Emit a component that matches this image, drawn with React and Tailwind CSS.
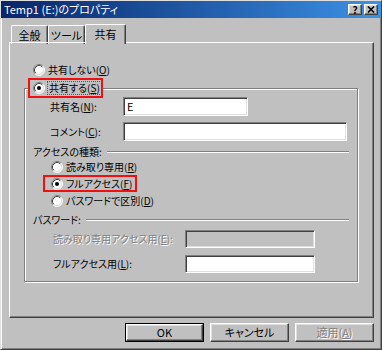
import React from 'react';

// Win2000 style "共有" property sheet

const sunken =
  'border border-t-[#808080] border-l-[#808080] border-r-white border-b-white shadow-[inset_1px_1px_0_#404040,inset_-1px_-1px_0_#dfdfdf]';
const raised =
  'border border-t-white border-l-white border-r-[#404040] border-b-[#404040] shadow-[inset_-1px_-1px_0_#808080,inset_1px_1px_0_#dfdfdf]';
const disabledText = 'text-[#808080] [text-shadow:1px_1px_0_#fff]';

const Radio = ({ checked }) => (
  <svg width="12" height="12" viewBox="0 0 12 12" className="shrink-0">
    <circle cx="6" cy="6" r="5" fill="#fff" />
    <path d="M2.11 9.89 A5.5 5.5 0 0 1 9.89 2.11" fill="none" stroke="#808080" />
    <path d="M9.89 2.11 A5.5 5.5 0 0 1 2.11 9.89" fill="none" stroke="#fff" />
    <path d="M2.82 9.18 A4.5 4.5 0 0 1 9.18 2.82" fill="none" stroke="#404040" />
    <path d="M9.18 2.82 A4.5 4.5 0 0 1 2.82 9.18" fill="none" stroke="#dfdfdf" />
    {checked && <circle cx="6" cy="6" r="2" fill="#000" />}
  </svg>
);

const Key = ({ k }) => (
  <>
    (<span className="underline underline-offset-1">{k}</span>)
  </>
);

const Header = ({ children, className = '' }) => (
  <div className={`flex items-center h-[12px] pl-[8px] pr-[8px] ${className}`}>
    <span className="whitespace-nowrap">{children}</span>
    <div className="ml-[5px] flex-1 h-[2px] border-t border-t-[#808080] border-b border-b-white" />
  </div>
);

const Tab = ({ label, active, width }) =>
  active ? (
    <div
      className={`relative z-10 h-[20px] ${width} bg-[#c0c0c0] rounded-t-[2px] border-t border-l border-t-white border-l-white border-r border-r-[#404040] shadow-[inset_-1px_0_0_#808080] flex justify-center pt-[4px]`}
    >
      {label}
    </div>
  ) : (
    <div
      className={`h-[19px] ${width} rounded-t-[2px] border-t border-l border-t-white border-l-white border-r border-r-[#404040] shadow-[inset_-1px_0_0_#808080] flex justify-center pt-[4px]`}
    >
      {label}
    </div>
  );

const App = () => {
  return (
    <div className="w-[382px] h-[350px] bg-[#c0c0c0] border border-t-[#dfdfdf] border-l-[#dfdfdf] border-r-[#404040] border-b-[#404040] shadow-[inset_1px_1px_0_#fff,inset_-1px_-1px_0_#808080] flex flex-col text-[10px] leading-none text-black font-['Noto_Sans_CJK_JP','Noto_Sans',sans-serif] [font-feature-settings:'palt'] whitespace-nowrap overflow-hidden">
      {/* Title bar */}
      <div className="h-[17px] shrink-0 flex items-center justify-between pl-[3px] pr-[3px] bg-linear-to-r from-[#0a246a] to-[#3d92e6]">
        <span className="text-white text-[11px]">Temp1 (E:)のプロパティ</span>
        <div className="flex gap-[2px]">
          <div className={`w-[14px] h-[11px] bg-[#c0c0c0] ${raised} flex items-center justify-center text-[10px] font-bold`}>?</div>
          <div className={`w-[14px] h-[11px] bg-[#c0c0c0] ${raised} flex items-center justify-center`}>
            <svg width="8" height="7" viewBox="0 0 8 7">
              <path d="M1 0.5 L7 6.5 M7 0.5 L1 6.5" stroke="#000" strokeWidth="1.6" />
            </svg>
          </div>
        </div>
      </div>

      <div className="pl-[8px] flex flex-col">
        {/* Tabs */}
        <div className="mt-[6px] ml-[2px] flex items-end text-[11px]">
          <Tab label="全般" width="w-[37px]" />
          <Tab label="ツール" width="w-[37px]" />
          <Tab label="共有" width="w-[41px]" active />
        </div>

        {/* Panel */}
        <div className="-mt-[2px] w-[365px] h-[276px] border-l border-t border-l-white border-t-white border-r border-b border-r-[#404040] border-b-[#404040] shadow-[inset_-1px_-1px_0_#808080] pl-[14px] pt-[20px]">
          <div className="ml-[9px] h-[14px] flex items-center gap-[3px]">
            <Radio />
            <span>共有しない<Key k="O" /></span>
          </div>

          <fieldset className="mt-[1px] w-[334px] border border-[#808080] shadow-[inset_1px_1px_0_#fff,1px_1px_0_#fff] pb-[8px]">
            <legend className="ml-[3px] p-0 bg-[#c0c0c0]">
              <span className="flex items-center h-[20px] w-[75px] border-2 border-[#f01010] pl-[3px] gap-[2px]">
                <Radio checked />
                <span className="border border-dotted border-[#555] px-[1px] py-[1px]">
                  共有する<Key k="S" />
                </span>
              </span>
            </legend>

            <div className="-mt-px flex items-center h-[19px]">
              <span className="ml-[25px] w-[73px]">共有名<Key k="N" />:</span>
              <div className={`w-[125px] h-[19px] bg-white ${sunken} flex items-center pl-[3px] text-[11px]`}>E</div>
            </div>
            <div className="mt-[6px] flex items-center h-[19px]">
              <span className="ml-[25px] w-[73px]">コメント<Key k="C" />:</span>
              <div className={`w-[224px] h-[19px] bg-white ${sunken}`} />
            </div>

            <Header className="mt-[5px]">アクセスの種類:</Header>

            <div className="ml-[18px] flex flex-col items-start">
              <div className="h-[17px] flex items-center border-2 border-transparent pl-[6px] gap-[3px]">
                <Radio />
                <span>読み取り専用<Key k="R" /></span>
              </div>
              <div className="h-[17px] w-[94px] flex items-center border-2 border-[#f01010] pl-[6px] gap-[3px]">
                <Radio checked />
                <span>フルアクセス<Key k="F" /></span>
              </div>
              <div className="h-[17px] flex items-center border-2 border-transparent pl-[6px] gap-[3px]">
                <Radio />
                <span>パスワードで区別<Key k="D" /></span>
              </div>
            </div>

            <Header className="mt-[5px]">パスワード:</Header>

            <div className="mt-[4px] flex items-center h-[18px]">
              <span className={`ml-[28px] w-[132px] ${disabledText}`}>読み取り専用アクセス用<Key k="E" />:</span>
              <div className={`w-[130px] h-[18px] bg-[#c0c0c0] ${sunken}`} />
            </div>
            <div className="mt-[7px] flex items-center h-[18px]">
              <span className="ml-[28px] w-[132px]">フルアクセス用<Key k="L" />:</span>
              <div className={`w-[130px] h-[18px] bg-white ${sunken}`} />
            </div>
          </fieldset>
        </div>

        {/* Buttons */}
        <div className="mt-[5px] w-[365px] flex justify-end gap-[6px] text-[11px]">
          <div className="w-[79px] h-[19px] border border-black flex">
            <div className={`flex-1 ${raised} flex items-center justify-center`}>OK</div>
          </div>
          <div className={`w-[79px] h-[19px] ${raised} flex items-center justify-center`}>キャンセル</div>
          <div className={`w-[79px] h-[19px] ${raised} flex items-center justify-center ${disabledText}`}>
            適用<Key k="A" />
          </div>
        </div>
      </div>
    </div>
  );
};

export default App;
